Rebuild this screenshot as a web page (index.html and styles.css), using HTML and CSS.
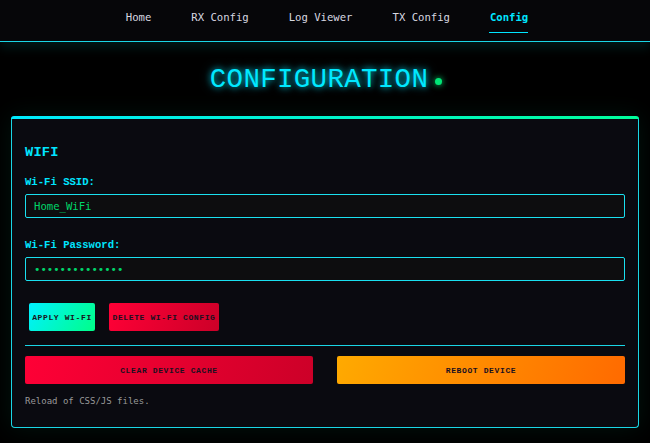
FILE: index.html
```html
<!DOCTYPE html>
<html lang="en">
<head>
<meta charset="utf-8">
<title>Configuration</title>
<link rel="stylesheet" href="styles.css">
</head>
<body>
<nav class="nav">
  <a class="nav-link" href="#">Home</a>
  <a class="nav-link" href="#">RX Config</a>
  <a class="nav-link" href="#">Log Viewer</a>
  <a class="nav-link" href="#">TX Config</a>
  <a class="nav-link active" href="#">Config</a>
</nav>
<h1 class="title">CONFIGURATION<span class="dot"></span></h1>
<section class="card">
  <h2 class="card-title">WIFI</h2>
  <label class="label">Wi-Fi SSID:</label>
  <div class="input">Home_WiFi</div>
  <label class="label">Wi-Fi Password:</label>
  <div class="input pw">••••••••••••••</div>
  <div class="btn-row">
    <button class="btn btn-apply">APPLY WI-FI</button>
    <button class="btn btn-red">DELETE WI-FI CONFIG</button>
  </div>
  <hr class="divider">
  <div class="btn-grid">
    <button class="btn btn-red wide">CLEAR DEVICE CACHE</button>
    <button class="btn btn-orange wide">REBOOT DEVICE</button>
  </div>
  <p class="note">Reload of CSS/JS files.</p>
</section>
</body>
</html>
```
FILE: styles.css
```css
* { box-sizing: border-box; }
html, body { margin: 0; padding: 0; }
body {
  background: #000;
  color: #ccc;
  font-family: "DejaVu Sans Mono", "Liberation Mono", monospace;
  width: 650px;
  height: 443px;
  overflow: hidden;
}
.nav {
  height: 42px;
  background: #060609;
  border-bottom: 1px solid #1ad6e6;
  display: flex;
  justify-content: center;
  gap: 39px;
  padding-top: 11px;
  padding-left: 3px;
  box-shadow: 0 6px 10px rgba(0, 200, 190, 0.12);
  position: relative;
}
.nav-link {
  color: #d8d8e0;
  text-decoration: none;
  font-size: 10.6px;
  height: 22px;
  padding-left: 1px;
}
.nav-link.active {
  color: #00e5ff;
  font-weight: bold;
  border-bottom: 1px solid #00e5ff;
}
.title {
  margin: 20px 0 0;
  height: 54px;
  text-align: center;
  font-family: "Liberation Mono", monospace;
  font-weight: normal;
  font-size: 27.5px;
  letter-spacing: 0.3px;
  color: #00e8ff;
  text-shadow: 0 0 6px rgba(0, 229, 255, 0.8), 0 0 12px rgba(0, 229, 255, 0.4);
  line-height: 36px;
  padding-left: 2px;
}
.dot {
  display: inline-block;
  width: 7px;
  height: 7px;
  border-radius: 50%;
  background: #00e676;
  box-shadow: 0 0 6px #00e676;
  margin-left: 7px;
  vertical-align: 2px;
}
.card {
  margin: 0 11px;
  height: 312px;
  background: #0a0a10;
  border: 1px solid #1ad6e6;
  border-top: 3px solid transparent;
  border-radius: 4px;
  padding: 25px 13px 0;
  box-shadow: 0 0 24px rgba(0, 255, 180, 0.08);
  position: relative;
  background-clip: padding-box;
}
.card::before {
  content: "";
  position: absolute;
  left: -1px;
  right: -1px;
  top: -3px;
  height: 3px;
  border-radius: 4px 4px 0 0;
  background: linear-gradient(90deg, #00ecff, #00ff9c);
}
.card-title {
  margin: 0;
  font-family: "Liberation Mono", monospace;
  font-size: 13.7px;
  font-weight: bold;
  color: #00e5ff;
  line-height: 18px;
  letter-spacing: 0.2px;
}
.label {
  display: block;
  font-family: "Liberation Mono", monospace;
  font-weight: bold;
  font-size: 10.6px;
  color: #00e5ff;
  margin-top: 13px;
  line-height: 14px;
}
.label + .input { margin-top: 5px; }
.input + .label { margin-top: 20px; }
.input {
  height: 24px;
  border: 1px solid #1ae0f0;
  border-radius: 2px;
  background: #0d0d0f;
  color: #00d66a;
  font-size: 10.6px;
  line-height: 22px;
  padding-left: 8px;
}
.btn-row {
  display: flex;
  gap: 14px;
  padding-left: 4px;
  margin-top: 22px;
}
.btn {
  border: none;
  border-radius: 2px;
  height: 28px;
  font-family: "Liberation Mono", monospace;
  font-weight: bold;
  font-size: 8px;
  letter-spacing: 0.62px;
  color: #1a1020;
  padding: 0 2px;
  cursor: pointer;
  white-space: nowrap;
}
.btn-apply {
  width: 66px;
  background: linear-gradient(120deg, #00f0ff, #00ff88);
}
.btn-red {
  width: 110px;
  background: linear-gradient(110deg, #ff0036, #cc0028);
}
.btn-orange {
  background: linear-gradient(110deg, #ffaa00, #ff6a00);
}
.divider {
  border: none;
  border-top: 1px solid #1ad6e6;
  margin: 14px 0 0;
  height: 0;
}
.btn-grid {
  display: grid;
  grid-template-columns: 1fr 1fr;
  gap: 24px;
  margin-top: 10px;
}
.btn.wide { width: auto; }
.note {
  margin: 12px 0 0;
  font-size: 9px;
  color: #999;
}
```
